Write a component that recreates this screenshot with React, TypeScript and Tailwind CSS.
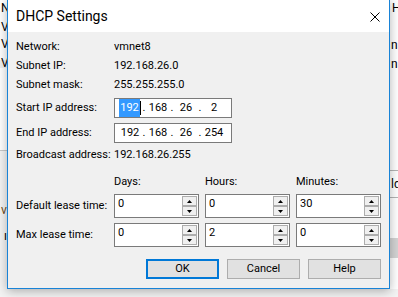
import React from "react";

const ui = "font-['Roboto','Liberation_Sans',sans-serif]";

function Arrow({ up }: { up?: boolean }) {
  return (
    <svg width="5" height="3" viewBox="0 0 5 3">
      <path d={up ? "M2.5 0L5 3H0z" : "M0 0H5L2.5 3z"} fill="#000" />
    </svg>
  );
}

function SpinBox({ value }: { value: string }) {
  return (
    <div className="flex h-[24px] w-[85px] border border-[#7a7a7a] bg-white">
      <div className="flex-1 pl-[3px] leading-[17px]">{value}</div>
      {/* up / down buttons */}
      <div className="my-[1px] mr-[1px] flex w-[15px] flex-col">
        <div className="flex h-[10px] items-center justify-center border border-[#adadad] bg-[#f0f0f0]">
          <Arrow up />
        </div>
        <div className="flex h-[10px] items-center justify-center border border-[#adadad] bg-[#f0f0f0]">
          <Arrow />
        </div>
      </div>
    </div>
  );
}

function IpBox({ parts, selectFirst }: { parts: string[]; selectFirst?: boolean }) {
  return (
    <div className="flex h-[20px] w-[118px] items-center border border-[#7a7a7a] bg-white pl-[3px] leading-[18px]">
      {parts.map((p, i) => (
        <React.Fragment key={i}>
          {i > 0 && <span className="w-[4px] text-center">.</span>}
          <span className="flex w-[24px] justify-center">
            {i === 0 && selectFirst ? (
              <span className="flex items-center">
                <span className="bg-[#3399ff] px-[1px] text-white">{p}</span>
                <span className="h-[14px] w-[1px] bg-black" />
              </span>
            ) : (
              p
            )}
          </span>
        </React.Fragment>
      ))}
    </div>
  );
}

function Row({ label, children, h = "h-[19px]" }: { label: string; children: React.ReactNode; h?: string }) {
  return (
    <div className={`flex items-center ${h}`}>
      <div className="w-[98px] shrink-0">{label}</div>
      {children}
    </div>
  );
}

function Button({ label, primary }: { label: string; primary?: boolean }) {
  return (
    <button
      type="button"
      className={`h-[20px] w-[73px] bg-[#e1e1e1] text-center leading-[16px] ${
        primary ? "border-2 border-[#0078d7]" : "border border-[#adadad]"
      }`}
    >
      {label}
    </button>
  );
}

export default function App() {
  return (
    <div className={`relative h-[297px] w-[398px] overflow-hidden bg-white text-[11px] text-black ${ui}`}>
      {/* window behind, peeking out at the edges */}
      <div className="absolute left-0 top-[60px] h-[8px] w-[8px] bg-[#f0f0f0]" />
      <div className="absolute left-0 top-[150px] h-[1px] w-[8px] bg-[#c8c8c8]" />
      <div className="absolute left-0 top-[151px] h-[146px] w-[8px] bg-[#f4f4f4]" />
      <span className="absolute left-[1px] top-[0px] text-[12px] leading-[16px]">N</span>
      <span className="absolute left-[1px] top-[19px] text-[12px] leading-[16px]">V</span>
      <span className="absolute left-[1px] top-[36px] text-[12px] leading-[16px]">V</span>
      <span className="absolute left-[1px] top-[55px] text-[12px] leading-[16px]">V</span>
      <span className="absolute left-[1px] top-[202px] text-[12px] leading-[16px] text-[#6b4a1a]">v</span>
      <span className="absolute left-[4px] top-[228px] text-[12px] leading-[16px]">ı</span>
      <span className="absolute left-[392px] top-[0px] text-[12px] leading-[16px]">HC</span>
      <span className="absolute left-[391px] top-[37px] text-[12px] leading-[16px]">na</span>
      <span className="absolute left-[391px] top-[56px] text-[12px] leading-[16px]">na</span>
      <div className="absolute left-[390px] top-[170px] h-[1px] w-[8px] bg-[#b4b4b4]" />
      <span className="absolute left-[391px] top-[176px] text-[12px] leading-[16px]">ld</span>
      <div className="absolute left-[390px] top-[197px] h-[1px] w-[8px] bg-[#b4b4b4]" />
      <div className="absolute left-[390px] top-[238px] h-[20px] w-[8px] bg-[#d4d4d4]" />
      <div className="absolute left-0 top-[289px] h-[8px] w-[398px] bg-[#f3f3f3]" />

      {/* DHCP Settings dialog */}
      <div className="absolute left-[7px] top-[-1px] flex h-[290px] w-[383px] flex-col border border-[#1883d7] bg-[#f0f0f0] shadow-[0_2px_10px_rgba(0,0,0,0.3)]">
        <div className="flex h-[32px] shrink-0 items-center justify-between bg-white pl-[8px] pr-[9px] pt-[1px]">
          <span className="text-[14px]">DHCP Settings</span>
          <svg width="10" height="10" viewBox="0 0 10 10">
            <path d="M0.5 0.5L9.5 9.5M9.5 0.5L0.5 9.5" stroke="#000" strokeWidth="1" />
          </svg>
        </div>

        <div className="flex flex-col px-[8px] pt-[6px]">
          <Row label="Network:">vmnet8</Row>
          <Row label="Subnet IP:">192.168.26.0</Row>
          <Row label="Subnet mask:">255.255.255.0</Row>
          <div className="mt-[3px]">
            <Row label="Start IP address:" h="h-[20px]">
              <IpBox parts={["192", "168", "26", "2"]} selectFirst />
            </Row>
          </div>
          <div className="mt-[5px]">
            <Row label="End IP address:" h="h-[20px]">
              <IpBox parts={["192", "168", "26", "254"]} />
            </Row>
          </div>
          <div className="mt-[3px]">
            <Row label="Broadcast address:">192.168.26.255</Row>
          </div>

          {/* lease times */}
          <div className="mt-[8px] flex h-[19px] items-center">
            <div className="w-[98px]" />
            <div className="w-[91px]">Days:</div>
            <div className="w-[91px]">Hours:</div>
            <div>Minutes:</div>
          </div>
          <div className="mt-[2px]">
            <Row label="Default lease time:" h="h-[24px]">
              <div className="flex gap-[6px]">
                <SpinBox value="0" />
                <SpinBox value="0" />
                <SpinBox value="30" />
              </div>
            </Row>
          </div>
          <div className="mt-[5px]">
            <Row label="Max lease time:" h="h-[24px]">
              <div className="flex gap-[6px]">
                <SpinBox value="0" />
                <SpinBox value="2" />
                <SpinBox value="0" />
              </div>
            </Row>
          </div>

          <div className="mt-[12px] flex justify-end gap-[8px]">
            <Button label="OK" primary />
            <Button label="Cancel" />
            <Button label="Help" />
          </div>
        </div>
      </div>
    </div>
  );
}
